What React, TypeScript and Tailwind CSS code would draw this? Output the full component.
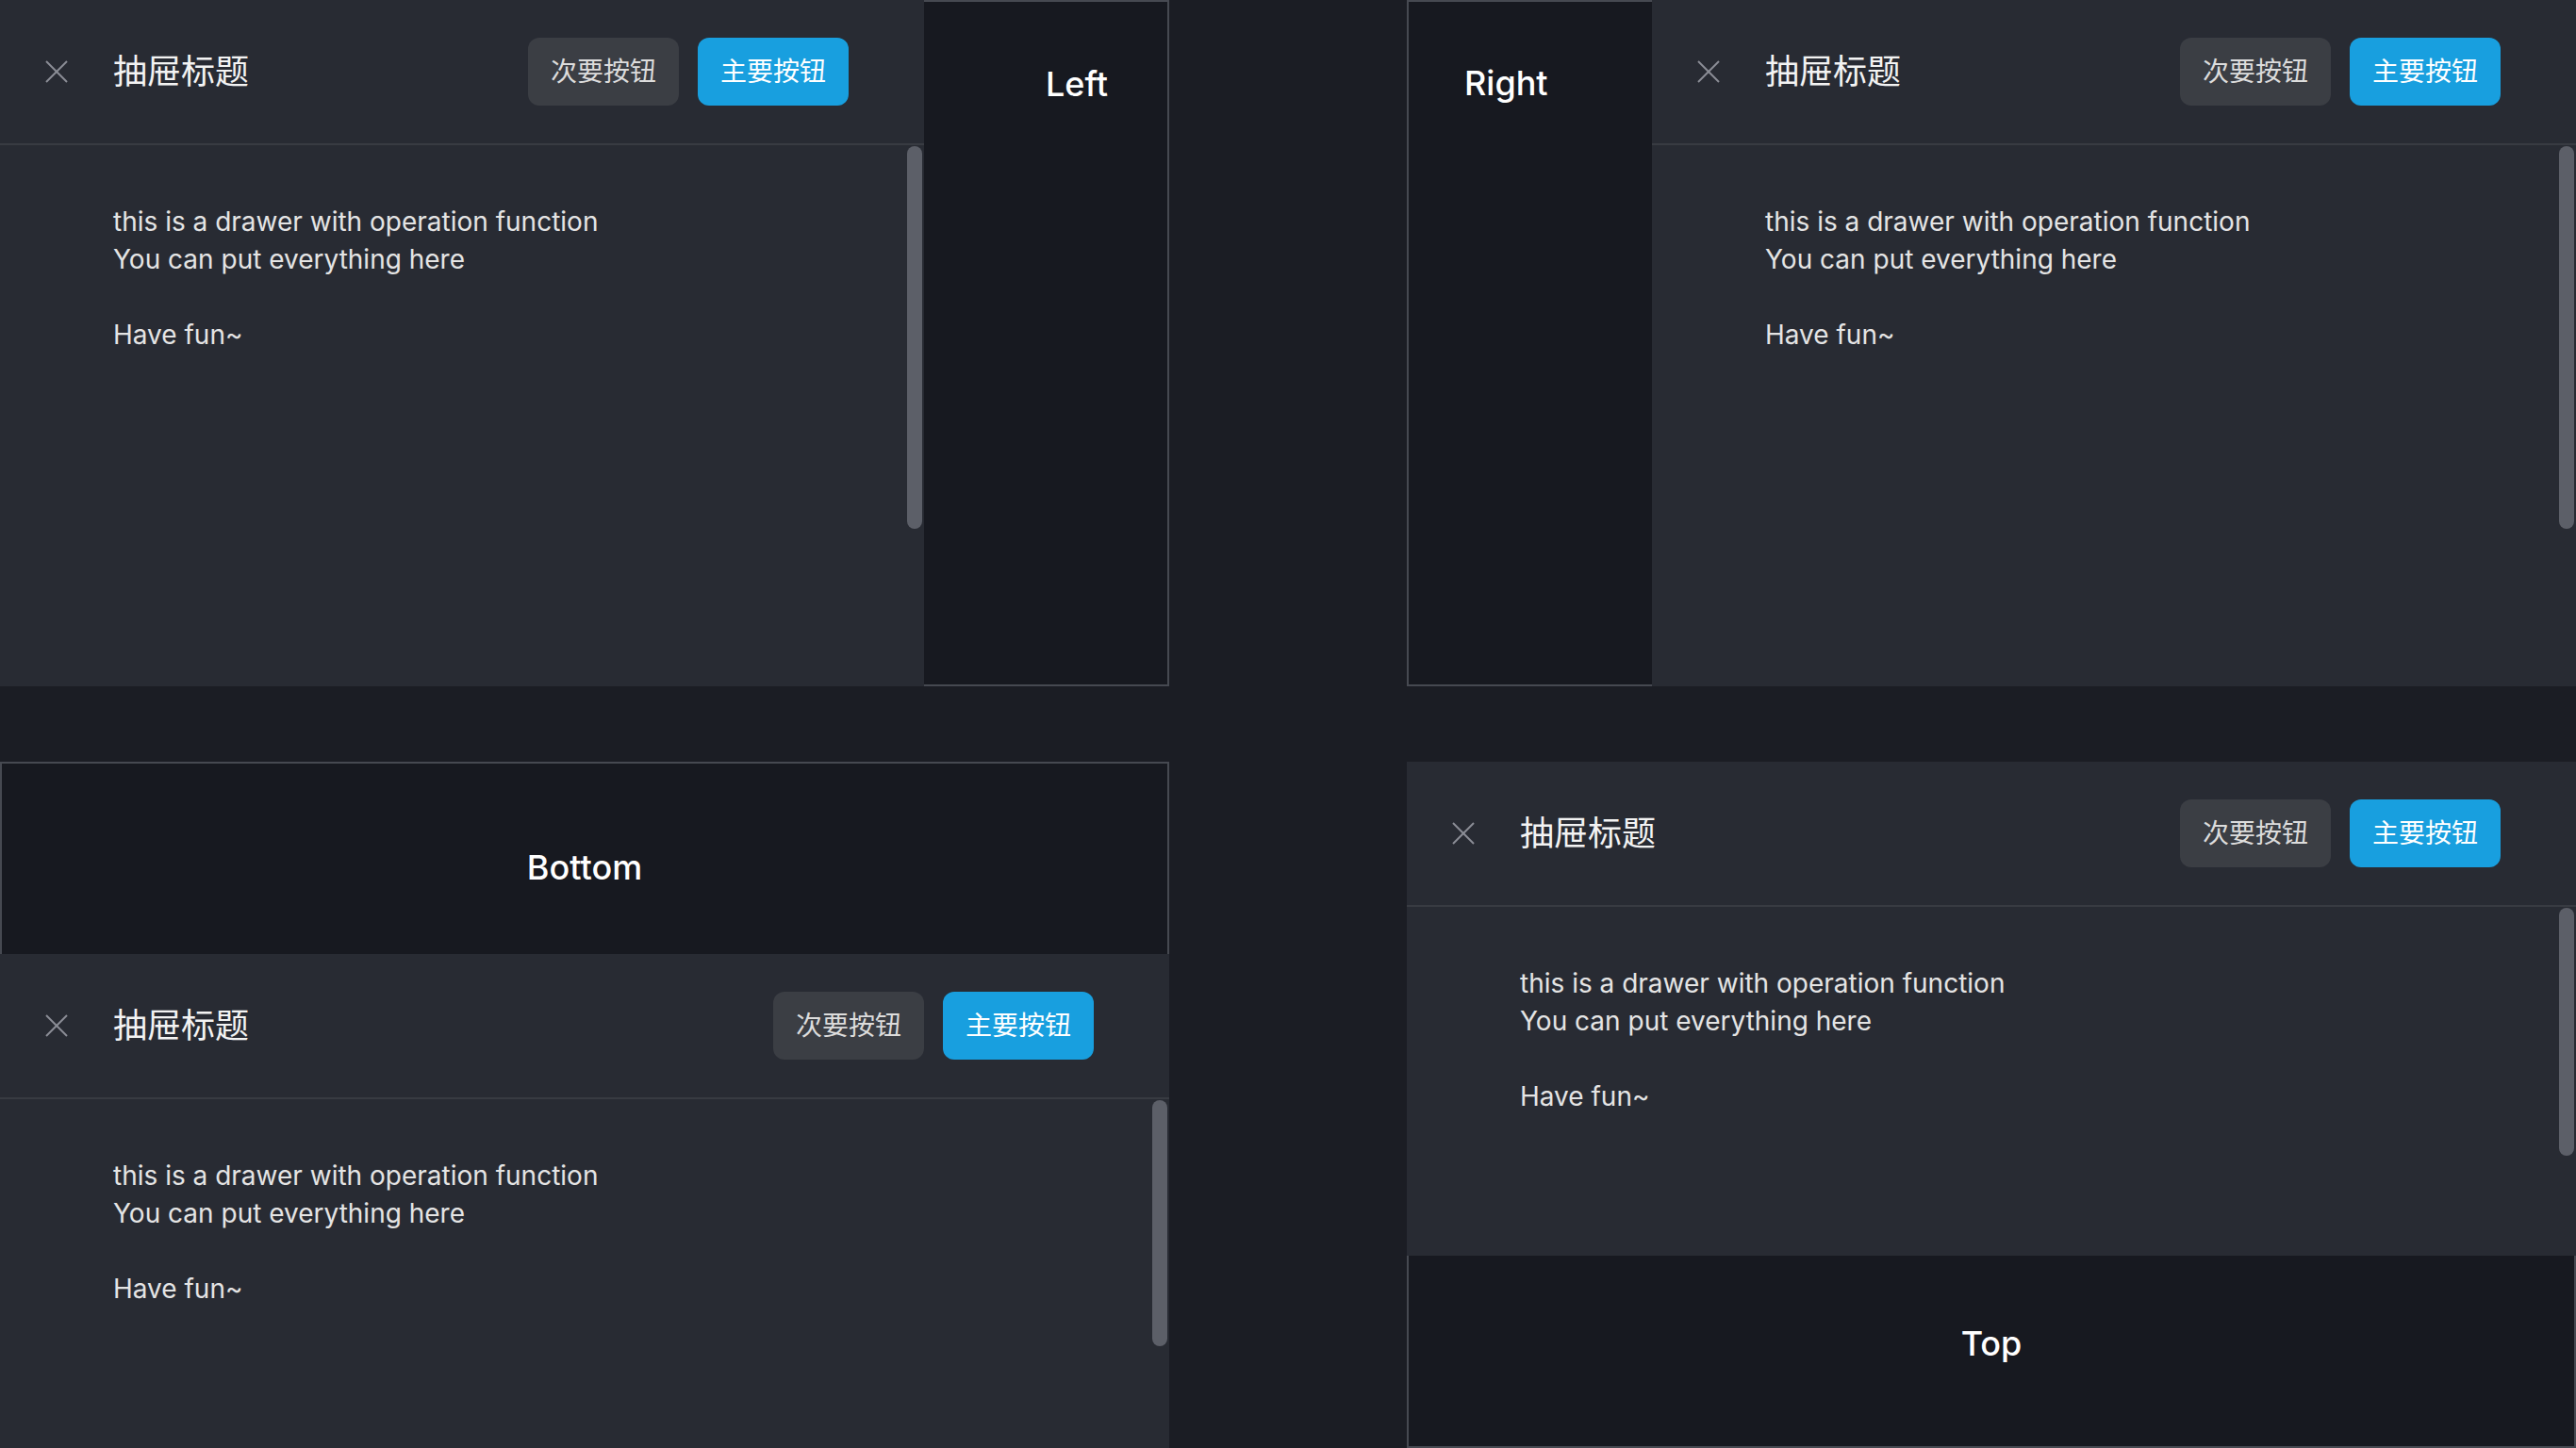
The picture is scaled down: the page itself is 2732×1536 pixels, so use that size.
import React from "react";

const FONT = "font-['Inter','Noto_Sans_CJK_SC',sans-serif]";

function CloseIcon() {
  return (
    <svg width="24" height="24" viewBox="0 0 24 24" className="shrink-0">
      <line x1="1" y1="1" x2="23" y2="23" stroke="#8b8e96" strokeWidth="2" />
      <line x1="23" y1="1" x2="1" y2="23" stroke="#8b8e96" strokeWidth="2" />
    </svg>
  );
}

function Drawer({ thumb, className }: { thumb: string; className: string }) {
  return (
    <div className={`flex flex-col bg-[#282b33] ${className}`}>
      <div className="flex h-[154px] shrink-0 items-center border-b-2 border-[#383b42] pl-[48px] pr-[80px]">
        <CloseIcon />
        <div className="ml-[48px] text-[36px] leading-[40px] text-[#f3f3f3]">抽屉标题</div>
        <div className="ml-auto flex gap-[20px]">
          <button className="flex h-[72px] w-[160px] items-center justify-center rounded-[12px] bg-[#3b3e44] text-[28px] text-[#dcdcdc]">
            次要按钮
          </button>
          <button className="flex h-[72px] w-[160px] items-center justify-center rounded-[12px] bg-[#189fdf] text-[28px] text-white">
            主要按钮
          </button>
        </div>
      </div>
      <div className="relative flex-1 overflow-hidden pl-[120px] pt-[61px] text-[28px] leading-[40px] text-[#e4e4e4]">
        <div>this is a drawer with operation function</div>
        <div>You can put everything here</div>
        <div className="h-[40px]" />
        <div>Have fun~</div>
        <div className={`absolute right-[2px] top-[1px] w-[16px] rounded-full bg-[#5c5f68] ${thumb}`} />
      </div>
    </div>
  );
}

export default function App() {
  return (
    <div className={`grid h-[1536px] w-[2732px] grid-cols-[1240px_1240px] grid-rows-[728px_728px] gap-x-[252px] gap-y-[80px] overflow-hidden bg-[#1b1d24] ${FONT}`}>
      {/* Left */}
      <div className="flex">
        <Drawer className="w-[980px] shrink-0" thumb="h-[406px]" />
        <div className="flex-1 border-2 border-l-0 border-[#464951] bg-[#171920] pl-[129px] pt-[67px]">
          <div className="text-[36px] font-medium leading-[40px] text-white">Left</div>
        </div>
      </div>
      {/* Right */}
      <div className="flex">
        <div className="w-[260px] shrink-0 border-2 border-r-0 border-[#464951] bg-[#171920] pl-[59px] pt-[66px]">
          <div className="text-[36px] font-medium leading-[40px] text-white">Right</div>
        </div>
        <Drawer className="flex-1" thumb="h-[406px]" />
      </div>
      {/* Bottom */}
      <div className="flex flex-col">
        <div className="flex h-[204px] shrink-0 justify-center border-2 border-b-0 border-[#464951] bg-[#171920] pt-[90px]">
          <div className="text-[36px] font-medium leading-[40px] text-white">Bottom</div>
        </div>
        <Drawer className="flex-1" thumb="h-[261px]" />
      </div>
      {/* Top */}
      <div className="flex flex-col">
        <Drawer className="h-[524px] shrink-0" thumb="h-[263px]" />
        <div className="flex flex-1 justify-center border-2 border-t-0 border-[#464951] bg-[#171920] pt-[73px]">
          <div className="text-[36px] font-medium leading-[40px] text-white">Top</div>
        </div>
      </div>
    </div>
  );
}
